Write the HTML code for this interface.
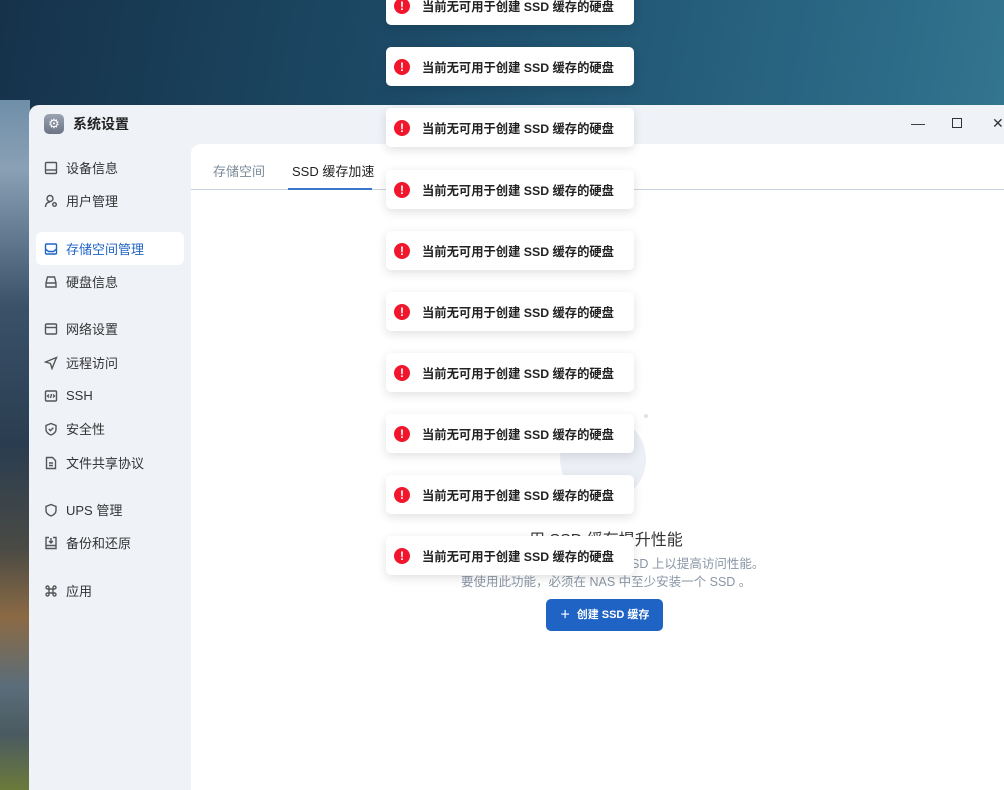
<!DOCTYPE html>
<html><head><meta charset="utf-8"><style>
*{margin:0;padding:0;box-sizing:border-box}
html,body{width:1004px;height:790px;overflow:hidden}
body{position:relative;font-family:"Liberation Sans","Noto Sans CJK SC",sans-serif;background:linear-gradient(100deg,#16324a 0%,#1d4d6a 40%,#2a6884 75%,#3a7d96 100%)}
.mtn{position:absolute;left:0;top:100px;width:30px;height:690px;background:linear-gradient(180deg,#6f8fa8 0%,#8aa0b5 10%,#3a5168 30%,#2a3d50 50%,#4a4a44 65%,#8b6a44 75%,#5a6d7a 85%,#4a5a60 92%,#6b7a3a 100%)}
.win{position:absolute;left:29px;top:105px;width:975px;height:685px;background:#eff3f8;border-radius:10px 0 0 0;overflow:hidden}
.title{position:absolute;left:15px;top:9px;display:flex;align-items:center;font-size:14px;color:#222;font-weight:bold}
.logo{width:20px;height:20px;border-radius:5px;background:linear-gradient(#9aa3b2,#6c7585);margin-right:9px;color:#fff;font-size:13px;text-align:center;line-height:20px;font-weight:normal}
.ctrl{position:absolute;top:10px;font-size:14px;color:#333}
.nav{position:absolute;left:7px;width:148px;height:33px;border-radius:6px;display:flex;align-items:center;padding-left:8px;font-size:13px;color:#333}
.nav svg{width:14px;height:14px;margin-right:8px;stroke:#555;fill:none;stroke-width:1.4}
.nav.act{background:#fff;color:#1f63c4}
.nav.act svg{stroke:#1f63c4}
.panel{position:absolute;left:162px;top:39px;width:813px;height:646px;background:#fff;border-radius:10px 0 0 0}
.tabs{position:absolute;left:0;top:0;right:0;height:46px;border-bottom:1px solid #c8d3e0}
.tab{position:absolute;top:17px;font-size:13px}
.ul{position:absolute;left:97px;top:44px;width:84px;height:2px;background:#3a76cc}
.toast{position:absolute;left:386px;width:248px;height:39px;background:#fff;border-radius:5px;box-shadow:0 3px 10px rgba(0,0,0,.12);display:flex;align-items:center;font-size:12.3px;font-weight:bold;color:#222;white-space:nowrap}
.toast i{width:16px;height:16px;border-radius:50%;background:#f2162c;color:#fff;font-style:normal;font-size:12px;font-weight:bold;text-align:center;line-height:16px;margin:0 12px 0 8px}
</style></head><body>
<div class="mtn"></div>
<div class="win">
 <div class="title"><div class="logo">⚙</div>系统设置</div>
 <div class="ctrl" style="left:882px">—</div>
 <div class="ctrl" style="left:923px;top:13px;width:10px;height:10px;border:1.5px solid #333"></div>
 <div class="ctrl" style="left:963px">✕</div>
 <div class="nav" style="top:46px"><svg viewBox="0 0 14 14"><rect x="1.5" y="1.5" width="11" height="11" rx="1"/><path d="M1.5 9h11"/></svg>设备信息</div>
 <div class="nav" style="top:79px"><svg viewBox="0 0 14 14"><circle cx="6" cy="4.5" r="3"/><path d="M1.5 13c0-3 2-5 4.5-5"/><circle cx="10.5" cy="10.5" r="1.8"/></svg>用户管理</div>
 <div class="nav act" style="top:127px"><svg viewBox="0 0 14 14"><rect x="1.5" y="2" width="11" height="10" rx="1"/><path d="M1.5 7l3 2.5h5l3-2.5"/></svg>存储空间管理</div>
 <div class="nav" style="top:160px"><svg viewBox="0 0 14 14"><path d="M2 8l1.5-6h7L12 8v4H2z M2 8h10"/></svg>硬盘信息</div>
 <div class="nav" style="top:207px"><svg viewBox="0 0 14 14"><rect x="1.5" y="2" width="11" height="10" rx="1"/><path d="M1.5 5.5h11"/></svg>网络设置</div>
 <div class="nav" style="top:241px"><svg viewBox="0 0 14 14"><path d="M12.5 1.5L1.5 6l5 1.5 1.5 5z"/></svg>远程访问</div>
 <div class="nav" style="top:274px"><svg viewBox="0 0 14 14"><rect x="1.5" y="2" width="11" height="10" rx="1"/><path d="M5 5.5L3.5 7 5 8.5M9 5.5l1.5 1.5L9 8.5M7.5 5l-1 4"/></svg>SSH</div>
 <div class="nav" style="top:307px"><svg viewBox="0 0 14 14"><path d="M7 1.5l5 2v4c0 3-2.5 4.5-5 5.5-2.5-1-5-2.5-5-5.5v-4z M4.8 7l1.6 1.6L9.3 5.8"/></svg>安全性</div>
 <div class="nav" style="top:341px"><svg viewBox="0 0 14 14"><path d="M2.5 1.5h6l3 3v8h-9z M5 7h4M5 9.5h4"/></svg>文件共享协议</div>
 <div class="nav" style="top:388px"><svg viewBox="0 0 14 14"><path d="M7 1.5l5 2v4c0 3-2.5 4.5-5 5.5-2.5-1-5-2.5-5-5.5v-4z"/></svg>UPS 管理</div>
 <div class="nav" style="top:421px"><svg viewBox="0 0 14 14"><path d="M5 1.5H2v11h10v-11H9 M7 2v5M5 5l2 2 2-2 M2 9.5h10"/></svg>备份和还原</div>
 <div class="nav" style="top:469px"><svg viewBox="0 0 14 14"><path d="M5 5V3.5A1.5 1.5 0 1 0 3.5 5H10.5A1.5 1.5 0 1 0 9 3.5V10.5A1.5 1.5 0 1 0 10.5 9H3.5A1.5 1.5 0 1 0 5 10.5z"/></svg>应用</div>
 <div class="panel">
  <div class="tabs"><div class="tab" style="left:22px;color:#7a8a9a">存储空间</div><div class="tab" style="left:101px;color:#222">SSD 缓存加速</div><div class="ul"></div></div>
  <div style="position:absolute;left:369px;top:272px;width:86px;height:86px;border-radius:50%;background:#eceff6"></div>
  <div style="position:absolute;left:453px;top:270px;width:4px;height:4px;border-radius:50%;background:#dde2ee"></div>
  <div style="position:absolute;left:338px;top:382px;font-size:16px;color:#333">用 SSD 缓存提升性能</div>
  <div style="position:absolute;left:440px;top:409px;font-size:12.5px;color:#8a96a6">SD 上以提高访问性能。</div>
  <div style="position:absolute;left:270px;top:427px;font-size:12.5px;color:#8a96a6">要使用此功能，必须在 NAS 中至少安装一个 SSD 。</div>
  <div style="position:absolute;left:355px;top:455px;width:117px;height:32px;border-radius:5px;background:#1f63c4;color:#fff;font-size:11px;font-weight:bold;text-align:center;line-height:32px">＋&nbsp; 创建 SSD 缓存</div>
 </div>
</div>
<div class="toast" style="top:-14px"><i>!</i>当前无可用于创建 SSD 缓存的硬盘</div>
<div class="toast" style="top:47px"><i>!</i>当前无可用于创建 SSD 缓存的硬盘</div>
<div class="toast" style="top:108px"><i>!</i>当前无可用于创建 SSD 缓存的硬盘</div>
<div class="toast" style="top:170px"><i>!</i>当前无可用于创建 SSD 缓存的硬盘</div>
<div class="toast" style="top:231px"><i>!</i>当前无可用于创建 SSD 缓存的硬盘</div>
<div class="toast" style="top:292px"><i>!</i>当前无可用于创建 SSD 缓存的硬盘</div>
<div class="toast" style="top:353px"><i>!</i>当前无可用于创建 SSD 缓存的硬盘</div>
<div class="toast" style="top:414px"><i>!</i>当前无可用于创建 SSD 缓存的硬盘</div>
<div class="toast" style="top:475px"><i>!</i>当前无可用于创建 SSD 缓存的硬盘</div>
<div class="toast" style="top:536px"><i>!</i>当前无可用于创建 SSD 缓存的硬盘</div>
</body></html>
